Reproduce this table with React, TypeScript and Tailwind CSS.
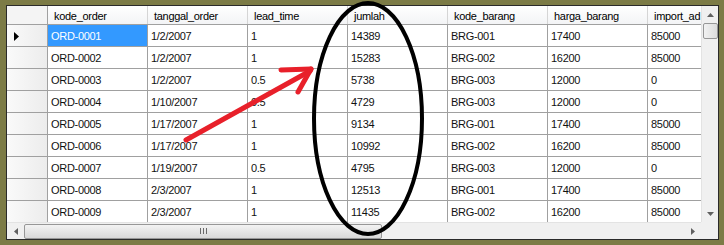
import React from 'react'

const cols = ['kode_order', 'tanggal_order', 'lead_time', 'jumlah', 'kode_barang', 'harga_barang', 'import_ad']

const rows: string[][] = [
  ['ORD-0001', '1/2/2007', '1', '14389', 'BRG-001', '17400', '85000'],
  ['ORD-0002', '1/2/2007', '1', '15283', 'BRG-002', '16200', '85000'],
  ['ORD-0003', '1/2/2007', '0.5', '5738', 'BRG-003', '12000', '0'],
  ['ORD-0004', '1/10/2007', '0.5', '4729', 'BRG-003', '12000', '0'],
  ['ORD-0005', '1/17/2007', '1', '9134', 'BRG-001', '17400', '85000'],
  ['ORD-0006', '1/17/2007', '1', '10992', 'BRG-002', '16200', '85000'],
  ['ORD-0007', '1/19/2007', '0.5', '4795', 'BRG-003', '12000', '0'],
  ['ORD-0008', '2/3/2007', '1', '12513', 'BRG-001', '17400', '85000'],
  ['ORD-0009', '2/3/2007', '1', '11435', 'BRG-002', '16200', '85000'],
]

function Arrow({ dir }: { dir: 'up' | 'down' | 'left' | 'right' }) {
  const pts = {
    up: '0,4 3.5,0 7,4',
    down: '0,0 3.5,4 7,0',
    left: '4,0 0,3.5 4,7',
    right: '0,0 4,3.5 0,7',
  }[dir]
  const w = dir === 'up' || dir === 'down' ? 7 : 4
  const h = dir === 'up' || dir === 'down' ? 4 : 7
  return (
    <svg width={w} height={h} viewBox={`0 0 ${w} ${h}`}>
      <polygon points={pts} fill="#606060" />
    </svg>
  )
}

export default function App() {
  return (
    <div
      className="w-[724px] h-[245px] bg-[#7c7b46] pt-[5px] pl-[6px] pr-[5px] pb-[5px] relative"
      style={{ fontFamily: '"Liberation Sans", Arial, sans-serif' }}
    >
      <div className="w-[713px] h-[235px] border border-[#2a2a2a] bg-white flex flex-col">
        <div className="flex h-[216px]">
          {/* grid */}
          <div className="w-[694px] h-[216px] overflow-hidden bg-white">
            {/* header */}
            <div className="flex h-[19px] border-b border-[#a0a0a0] bg-gradient-to-b from-white to-[#f3f4f6]">
              <div className="w-[41px] shrink-0 border-r border-[#a0a0a0] bg-[#f4f4f4]" />
              {cols.map(c => (
                <div
                  key={c}
                  className="w-[100px] shrink-0 border-r border-[#d5d5d5] pl-[6px] pt-[1px] text-[11px] tracking-[-0.3px] leading-[18px] text-black whitespace-nowrap overflow-hidden"
                >
                  {c}
                </div>
              ))}
            </div>
            {rows.map((r, i) => (
              <div key={r[0]} className="flex h-[22px]">
                <div className="w-[41px] shrink-0 border-r border-b border-[#a0a0a0] bg-gradient-to-r from-[#fafafa] to-[#ececec] flex items-center pl-[7px] pt-[2px]">
                  {i === 0 && (
                    <svg width="5" height="9" viewBox="0 0 5 9">
                      <polygon points="0,0 5,4.5 0,9" fill="#000" />
                    </svg>
                  )}
                </div>
                {r.map((v, j) => (
                  <div
                    key={j}
                    className={`w-[100px] shrink-0 border-r border-b border-[#a0a0a0] pl-[3px] pt-[2px] text-[11px] tracking-[-0.3px] leading-[19px] whitespace-nowrap overflow-hidden ${
                      i === 0 && j === 0 ? 'bg-[#3399ff] text-white' : 'text-[#111]'
                    }`}
                  >
                    {v}
                  </div>
                ))}
              </div>
            ))}
          </div>
          {/* vertical scrollbar */}
          <div className="w-[17px] h-[216px] bg-[#f0f0f0] border-l border-[#e3e3e3] flex flex-col items-center">
            <div className="h-[17px] w-full flex items-center justify-center">
              <Arrow dir="up" />
            </div>
            <div className="w-[15px] h-[16px] rounded-[2px] border border-[#979797] bg-gradient-to-r from-[#f2f2f2] to-[#dcdcdc]" />
            <div className="flex-1" />
            <div className="h-[17px] w-full flex items-center justify-center">
              <Arrow dir="down" />
            </div>
          </div>
        </div>
        {/* horizontal scrollbar */}
        <div className="flex h-[17px]">
          <div className="w-[694px] h-[17px] bg-[#f0f0f0] border-t border-[#e3e3e3] flex items-center">
            <div className="w-[17px] h-full flex items-center justify-center">
              <Arrow dir="left" />
            </div>
            <div className="w-[358px] h-[15px] rounded-[2px] border border-[#979797] bg-gradient-to-b from-[#f3f3f3] to-[#d8d8d8] flex items-center justify-center gap-[2px]">
              <div className="w-px h-[6px] bg-[#6a6a6a]" />
              <div className="w-px h-[6px] bg-[#6a6a6a]" />
              <div className="w-px h-[6px] bg-[#6a6a6a]" />
            </div>
            <div className="flex-1" />
            <div className="w-[17px] h-full flex items-center justify-center">
              <Arrow dir="right" />
            </div>
          </div>
          <div className="w-[17px] h-[17px] bg-[#f0f0f0]" />
        </div>
      </div>

      {/* annotations drawn on top of the screenshot */}
      <svg className="absolute left-0 top-0 pointer-events-none" width="724" height="245" viewBox="0 0 724 245">
        <ellipse cx="368" cy="118.5" rx="54" ry="115.5" fill="none" stroke="#000" strokeWidth="4" />
        <g stroke="#e8202a" strokeWidth="5" strokeLinecap="round" fill="none">
          <line x1="186" y1="140" x2="310" y2="71" />
          <line x1="281" y1="70" x2="311" y2="69" />
          <line x1="311" y1="69" x2="298" y2="92" />
        </g>
      </svg>
    </div>
  )
}
